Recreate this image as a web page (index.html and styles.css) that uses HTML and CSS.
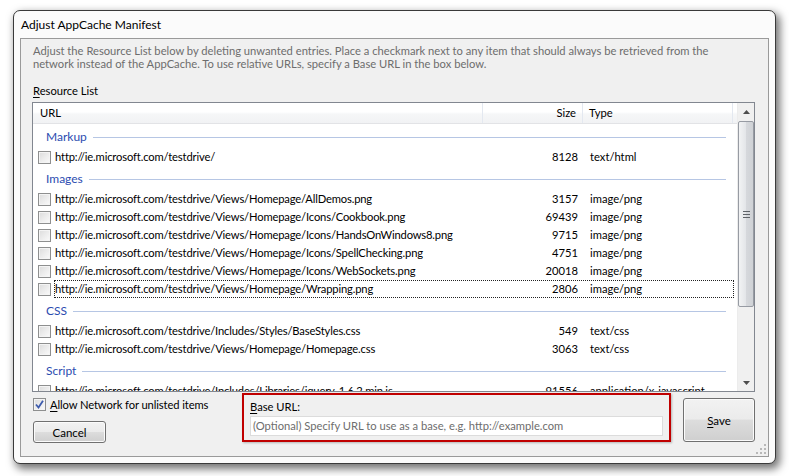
FILE: index.html
```html
<!DOCTYPE html>
<html>
<head>
<meta charset="utf-8">
<link rel="stylesheet" href="styles.css">
</head>
<body>
<div class="window">
  <div class="titlebar">Adjust AppCache Manifest</div>
  <div class="client">
    <p class="desc">Adjust the Resource List below by deleting unwanted entries. Place a checkmark next to any item that should always be retrieved from the<br>network instead of the AppCache. To use relative URLs, specify a Base URL in the box below.</p>
    <div class="label"><u>R</u>esource List</div>
    <div class="listbox">
      <div class="listmain">
        <div class="lhead">
          <div class="hc h-url">URL</div>
          <div class="hc h-size">Size</div>
          <div class="hc h-type">Type</div>
        </div>
        <div class="group"><span>Markup</span><i></i></div>
        <div class="row"><span class="cb"></span><div class="cells"><span class="c-url">http://ie.microsoft.com/testdrive/</span><span class="c-size">8128</span><span class="c-type">text/html</span></div></div>
        <div class="group"><span>Images</span><i></i></div>
        <div class="row"><span class="cb"></span><div class="cells"><span class="c-url">http://ie.microsoft.com/testdrive/Views/Homepage/AllDemos.png</span><span class="c-size">3157</span><span class="c-type">image/png</span></div></div>
        <div class="row"><span class="cb"></span><div class="cells"><span class="c-url">http://ie.microsoft.com/testdrive/Views/Homepage/Icons/Cookbook.png</span><span class="c-size">69439</span><span class="c-type">image/png</span></div></div>
        <div class="row"><span class="cb"></span><div class="cells"><span class="c-url">http://ie.microsoft.com/testdrive/Views/Homepage/Icons/HandsOnWindows8.png</span><span class="c-size">9715</span><span class="c-type">image/png</span></div></div>
        <div class="row"><span class="cb"></span><div class="cells"><span class="c-url">http://ie.microsoft.com/testdrive/Views/Homepage/Icons/SpellChecking.png</span><span class="c-size">4751</span><span class="c-type">image/png</span></div></div>
        <div class="row"><span class="cb"></span><div class="cells"><span class="c-url">http://ie.microsoft.com/testdrive/Views/Homepage/Icons/WebSockets.png</span><span class="c-size">20018</span><span class="c-type">image/png</span></div></div>
        <div class="row"><span class="cb"></span><div class="cells focus"><span class="c-url">http://ie.microsoft.com/testdrive/Views/Homepage/Wrapping.png</span><span class="c-size">2806</span><span class="c-type">image/png</span></div></div>
        <div class="group"><span>CSS</span><i></i></div>
        <div class="row"><span class="cb"></span><div class="cells"><span class="c-url">http://ie.microsoft.com/testdrive/Includes/Styles/BaseStyles.css</span><span class="c-size">549</span><span class="c-type">text/css</span></div></div>
        <div class="row"><span class="cb"></span><div class="cells"><span class="c-url">http://ie.microsoft.com/testdrive/Views/Homepage/Homepage.css</span><span class="c-size">3063</span><span class="c-type">text/css</span></div></div>
        <div class="group"><span>Script</span><i></i></div>
        <div class="row"><span class="cb"></span><div class="cells"><span class="c-url">http://ie.microsoft.com/testdrive/Includes/Libraries/jquery-1.6.2.min.js</span><span class="c-size">91556</span><span class="c-type">application/x-javascript</span></div></div>
      </div>
      <div class="vscroll">
        <div class="sbtn"><svg width="7" height="4" viewBox="0 0 7 4"><path d="M0 4 L3.5 0 L7 4 Z" fill="#4d4d4d"/></svg></div>
        <div class="thumb"><span class="grip"></span></div>
        <div class="track"></div>
        <div class="sbtn"><svg width="7" height="4" viewBox="0 0 7 4"><path d="M0 0 L7 0 L3.5 4 Z" fill="#4d4d4d"/></svg></div>
      </div>
    </div>
    <div class="bottom">
      <div class="leftcol">
        <label class="allow"><span class="cb checked"><svg width="9" height="9" viewBox="0 0 9 9"><path d="M1 4.5 L3.5 7.5 L8 0.8" fill="none" stroke="#3e5cad" stroke-width="1.8"/></svg></span><span><u>A</u>llow Network for unlisted items</span></label>
        <div class="btn cancel">Cancel</div>
      </div>
      <div class="basebox">
        <div class="baselabel"><u>B</u>ase URL:</div>
        <div class="input">(Optional) Specify URL to use as a base, e.g. http://example.com</div>
      </div>
      <div class="btn save"><span><u>S</u>ave</span></div>
    </div>
    <div class="grip-corner"><svg width="10" height="10" viewBox="0 0 10 10"><g fill="#b8b8b8"><rect x="8" y="0" width="2" height="2"/><rect x="4" y="4" width="2" height="2"/><rect x="8" y="4" width="2" height="2"/><rect x="0" y="8" width="2" height="2"/><rect x="4" y="8" width="2" height="2"/><rect x="8" y="8" width="2" height="2"/></g></svg></div>
  </div>
</div>
</body>
</html>
```
FILE: styles.css
```css
* { box-sizing: border-box; }
html, body { margin: 0; padding: 0; }
body {
  width: 789px; height: 476px; overflow: hidden;
  background: #ffffff;
  font-family: Lato, "Open Sans", "Liberation Sans", sans-serif;
  font-size: 11.2px;
  color: #000;
}
.window {
  margin: 10px 0 0 13px;
  width: 763px; height: 454px;
  border: 1px solid #3a3a3a;
  border-radius: 7px;
  background: #fbfbfb;
  box-shadow: 3px 4px 9px 1px rgba(0,0,0,0.55);
  display: flex; flex-direction: column;
  padding: 0 6px 6px 6px;
}
.titlebar {
  height: 27px;
  padding: 6px 0 0 1px;
  font-size: 12px;
  line-height: 16px;
  color: #000;
}
.client {
  position: relative;
  width: 749px; height: 419px;
  border: 1px solid #9a9a9a;
  background: #f0f0f0;
  padding: 0 0 0 11px;
  display: flex; flex-direction: column;
}
.desc {
  margin: 5px 0 0 1px;
  color: #6d6d6d;
  line-height: 13px;
  white-space: nowrap;
}
.label {
  margin: 13px 0 0 1px;
  line-height: 15px;
  height: 15px;
}
.label u, .allow u, .baselabel u, .save u { text-decoration: underline; text-underline-offset: 2px; }
.listbox {
  margin-top: 4px;
  width: 723px; height: 290px;
  border: 1px solid #828790;
  background: #fff;
  display: flex;
  overflow: hidden;
}
.listmain { width: 704px; overflow: hidden; }
.lhead {
  display: flex; height: 21px;
  background: linear-gradient(#ffffff 0%, #ffffff 45%, #f6f7f8 55%, #f1f2f4 100%);
  border-bottom: 1px solid #e2e3e6;
  line-height: 20px;
}
.hc { border-right: 1px solid #e3e8f0; }
.h-url { width: 450px; padding-left: 7px; }
.h-size { width: 100px; text-align: right; padding-right: 6px; }
.h-type { width: 150px; padding-left: 6px; }
.group {
  height: 24px;
  display: flex; align-items: center;
  padding: 0 11px 0 13px;
  color: #2b4cb0;
  font-size: 12px;
}
.group i { flex: 1; height: 1px; background: #b6c6e4; margin-left: 6px; margin-top: 2px; }
.row { height: 18px; display: flex; align-items: center; }
.cb {
  width: 13px; height: 13px; margin-left: 5px; flex: none;
  border: 1px solid #8e8f8f;
  background: linear-gradient(135deg, #dcdcdc, #fbfbfb);
  box-shadow: inset 0 0 0 1px #f4f4f4;
  display: flex; align-items: center; justify-content: center;
}
.cells {
  margin-left: 3px;
  display: grid;
  grid-template-columns: 428px 100px 150px;
  border: 1px dotted transparent;
  height: 18px;
  line-height: 16px;
}
.cells.focus { border-color: #222; }
.c-url { padding-left: 0; white-space: nowrap; overflow: hidden; letter-spacing: -0.15px; }
.c-size { text-align: right; padding-right: 5px; }
.c-type { padding-left: 7px; white-space: nowrap; }
.vscroll {
  width: 17px; height: 100%;
  background: #f0f0f0;
  border-left: 1px solid #ececec;
  display: flex; flex-direction: column;
}
.sbtn { height: 17px; display: flex; align-items: center; justify-content: center; flex: none; }
.thumb {
  height: 186px; flex: none;
  margin: 1px 0 0 0;
  border: 1px solid #979ba3;
  border-radius: 2px;
  background: linear-gradient(90deg, #f2f3f4, #e3e5e8 50%, #d6d8dc 51%, #cfd2d6);
  display: flex; align-items: center; justify-content: center;
}
.grip {
  width: 7px; height: 7px;
  background: repeating-linear-gradient(#5f6368 0 1px, transparent 1px 3px);
}
.track { flex: 1; }
.bottom {
  display: flex;
  margin-top: 1px;
  align-items: flex-start;
}
.leftcol {
  width: 210px;
  padding: 5px 0 0 1px;
  display: flex; flex-direction: column;
}
.allow { display: flex; align-items: center; height: 13px; }
.allow .cb { margin-left: 0; margin-right: 4px; }
.allow span:last-child { line-height: 13px; letter-spacing: -0.1px; }
.btn {
  border: 1px solid #707070;
  border-radius: 3px;
  background: linear-gradient(#f2f2f2 0%, #ebebeb 48%, #dddddd 50%, #cfcfcf 100%);
  box-shadow: inset 0 0 0 1px #fbfbfb;
  display: flex; align-items: center; justify-content: center;
  font-size: 11.5px;
}
.cancel { width: 73px; height: 22px; margin-top: 10px; }
.basebox {
  width: 429px; height: 49px;
  border: 2px solid #c00000;
  box-shadow: 1px 1px 2px rgba(0,0,0,0.25);
  padding: 4px 0 0 6px;
}
.baselabel { line-height: 15px; height: 15px; }
.input {
  margin-top: 2px;
  width: 413px; height: 20px;
  border: 1px solid #dcdcdc;
  background: #fff;
  color: #6d6d6d;
  padding-left: 2px;
  line-height: 18px;
}
.save { width: 72px; height: 44px; margin: 5px 0 0 12px; }
.grip-corner { position: absolute; right: 2px; bottom: 2px; line-height: 0; }
```
